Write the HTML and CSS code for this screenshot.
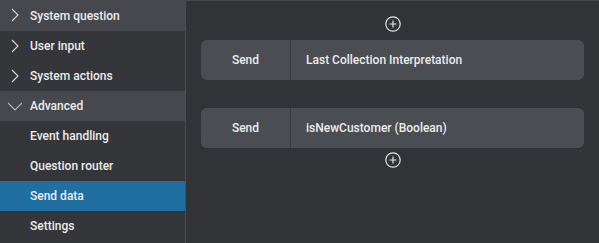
FILE: index.html
```html
<!DOCTYPE html>
<html lang="en">
<head>
  <meta charset="UTF-8">
  <title>Send data</title>
  <link rel="stylesheet" href="styles.css">
</head>
<body>

<div class="app">
  <div class="sidebar">
    <div class="item group open-hl">
      <svg class="chev" width="14" height="14" viewBox="0 0 14 14"><path d="M4 1 L10 7 L4 13" fill="none" stroke="#d8d8d8" stroke-width="1.1"/></svg>
      <span>System question</span>
    </div>
    <div class="item group">
      <svg class="chev" width="14" height="14" viewBox="0 0 14 14"><path d="M4 1 L10 7 L4 13" fill="none" stroke="#d8d8d8" stroke-width="1.1"/></svg>
      <span>User input</span>
    </div>
    <div class="item group">
      <svg class="chev" width="14" height="14" viewBox="0 0 14 14"><path d="M4 1 L10 7 L4 13" fill="none" stroke="#d8d8d8" stroke-width="1.1"/></svg>
      <span>System actions</span>
    </div>
    <div class="item group open-hl">
      <svg class="chev" width="14" height="14" viewBox="0 0 14 14"><path d="M0 4 L7 11 L14 4" fill="none" stroke="#b8b8b8" stroke-width="1.1"/></svg>
      <span>Advanced</span>
    </div>
    <div class="item sub">Event handling</div>
    <div class="item sub">Question router</div>
    <div class="item sub active">Send data</div>
    <div class="item sub">Settings</div>
  </div>

  <div class="main">
    <div class="add">
      <svg width="16" height="16" viewBox="0 0 16 16"><circle cx="8" cy="8" r="7.2" fill="none" stroke="#e6e6e6" stroke-width="1.2"/><path d="M8 4.5 V11.5 M4.5 8 H11.5" stroke="#e6e6e6" stroke-width="1.2"/></svg>
    </div>
    <div class="card">
      <div class="card-type">Send</div>
      <div class="card-value">Last Collection Interpretation</div>
    </div>
    <div class="card second">
      <div class="card-type">Send</div>
      <div class="card-value">isNewCustomer (Boolean)</div>
    </div>
    <div class="add below">
      <svg width="16" height="16" viewBox="0 0 16 16"><circle cx="8" cy="8" r="7.2" fill="none" stroke="#e6e6e6" stroke-width="1.2"/><path d="M8 4.5 V11.5 M4.5 8 H11.5" stroke="#e6e6e6" stroke-width="1.2"/></svg>
    </div>
  </div>
</div>

</body>
</html>
```

FILE: styles.css
```css
body {
  margin: 0;
  background: #333438;
  font-family: Roboto, "Liberation Sans", Arial, sans-serif;
  font-size: 12px;
  font-weight: 500;
  color: #ececec;
}
.app {
  display: flex;
  height: 243px;
}
.sidebar {
  width: 185px;
  background: #35363a;
  border-right: 1px solid #4a4c50;
}
.item {
  height: 30px;
  display: flex;
  align-items: center;
  padding-left: 30px;
}
.item:first-child {
  height: 31px;
}
.group {
  position: relative;
}
.chev {
  position: absolute;
  left: 8px;
  top: 8px;
}
.open-hl {
  background: #46484d;
}
.active {
  background: #1f6fa0;
}
.main {
  flex: 1;
  background: #323337;
  border-top: 1px solid #45474b;
  padding: 15px 15px 0 15px;
}
.add {
  display: flex;
  justify-content: center;
  height: 16px;
  margin-bottom: 8px;
}
.add.below {
  margin-top: 4px;
}
.card {
  display: flex;
  height: 40px;
  background: #4a4d52;
  border-radius: 6px;
}
.card.second {
  margin-top: 28px;
}
.card-type {
  width: 89px;
  border-right: 1px solid #3a3c40;
  display: flex;
  align-items: center;
  justify-content: center;
}
.card-value {
  display: flex;
  align-items: center;
  padding-left: 15px;
}
```
